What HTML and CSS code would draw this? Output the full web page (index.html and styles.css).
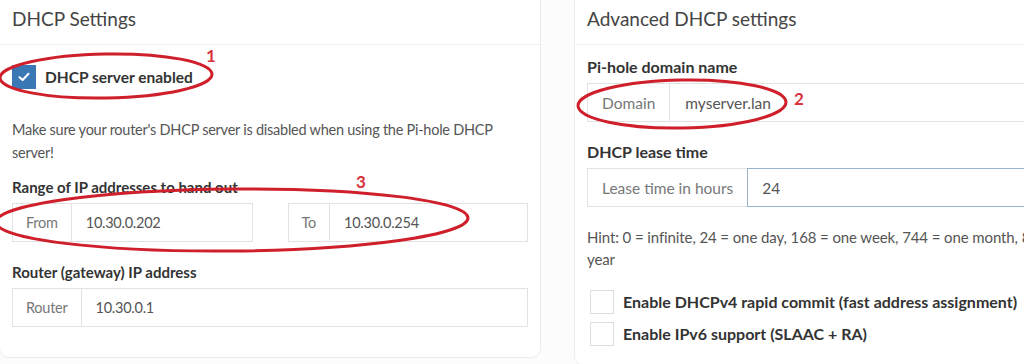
FILE: index.html
```html
<!DOCTYPE html>
<html lang="en">
<head>
    <meta charset="UTF-8">
    <title>DHCP</title>
    <link rel="stylesheet" href="styles.css">
</head>
<body>
    <div class="page">
        <section class="card card-left">
            <div class="card-header">
                <h3>DHCP Settings</h3>
            </div>
            <div class="card-body">
                <label class="check check-main">
                    <span class="box checked">
                        <svg width="14" height="14" viewBox="0 0 14 14"><polyline points="2.5,7.2 5.6,10 11.5,3.8" fill="none" stroke="#fff" stroke-width="2" stroke-linecap="round" stroke-linejoin="round"/></svg>
                    </span>
                    <span>DHCP server enabled</span>
                </label>
                <p class="note">Make sure your router's DHCP server is disabled when using the Pi-hole DHCP server!</p>

                <div class="form-group">
                    <label class="field-label">Range of IP addresses to hand out</label>
                    <div class="range-row">
                        <div class="input-group">
                            <span class="addon">From</span>
                            <input type="text" value="10.30.0.202">
                        </div>
                        <div class="input-group">
                            <span class="addon">To</span>
                            <input type="text" value="10.30.0.254">
                        </div>
                    </div>
                </div>

                <div class="form-group">
                    <label class="field-label">Router (gateway) IP address</label>
                    <div class="input-group">
                        <span class="addon">Router</span>
                        <input type="text" value="10.30.0.1">
                    </div>
                </div>
            </div>
        </section>

        <section class="card card-right">
            <div class="card-header">
                <h3>Advanced DHCP settings</h3>
            </div>
            <div class="card-body">
                <div class="form-group">
                    <label class="field-label">Pi-hole domain name</label>
                    <div class="input-group">
                        <span class="addon">Domain</span>
                        <input type="text" value="myserver.lan">
                    </div>
                </div>

                <div class="form-group">
                    <label class="field-label">DHCP lease time</label>
                    <div class="input-group">
                        <span class="addon">Lease time in hours</span>
                        <input type="text" value="24" class="focused">
                    </div>
                </div>

                <p class="note hint">Hint: 0 = infinite, 24 = one day, 168 = one week, 744 = one month, 8760 = one year</p>

                <div class="check-list">
                    <label class="check">
                        <span class="box"></span>
                        <span>Enable DHCPv4 rapid commit (fast address assignment)</span>
                    </label>
                    <label class="check">
                        <span class="box"></span>
                        <span>Enable IPv6 support (SLAAC + RA)</span>
                    </label>
                </div>
            </div>
        </section>
    </div>

    <!-- hand drawn annotations on top of the screenshot -->
    <svg class="marks" width="1024" height="364" viewBox="0 0 1024 364">
        <ellipse cx="106" cy="76" rx="106" ry="22" transform="rotate(-1 106 76)"/>
        <ellipse cx="232" cy="220" rx="236" ry="31" transform="rotate(-0.5 232 220)"/>
        <ellipse cx="682" cy="104" rx="104" ry="24" transform="rotate(-1 682 104)"/>
        <text x="206" y="62">1</text>
        <text x="356" y="188">3</text>
        <text x="794" y="105">2</text>
    </svg>
</body>
</html>
```

FILE: styles.css
```css
:root {
    --text: #555;
    --text-dark: #333;
    --heading: #444;
    --border: #e2e2e2;
    --card-border: #ececec;
    --blue: #3a77b5;
    --mark: #cf1f2b;
}

html, body {
    height: 364px;
    overflow: hidden;
}

body {
    margin: 0;
    position: relative;
    font-family: Lato, "Open Sans", sans-serif;
    font-size: 14.5px;
    letter-spacing: -0.25px;
    color: var(--text);
    background-color: #fcfcfc;
}

.page {
    display: flex;
    gap: 33px;
    margin-top: -12px;
}

.card {
    flex: 0 0 542px;
    width: 542px;
    min-width: 0;
    box-sizing: border-box;
    background-color: #fff;
    border: 1px solid var(--card-border);
    border-radius: 10px;
}

.card-left {
    height: 370px;
    margin-left: -1px;
}

.card-right {
    height: 378px;
}

.card-header {
    height: 56px;
    box-sizing: border-box;
    padding: 18px 12px 0;
    border-bottom: 1px solid #f0f0f0;
}

.card-header h3 {
    margin: 0;
    font-size: 19px;
    font-weight: normal;
    line-height: 24px;
    letter-spacing: 0;
    color: var(--heading);
}

.card-body {
    padding: 11px 12px 0 12px;
}

.check {
    display: flex;
    align-items: center;
    gap: 9px;
    font-size: 15.5px;
    font-weight: bold;
    letter-spacing: 0;
    color: var(--text-dark);
    height: 25px;
}

.check-main {
    margin-top: 8px;
}

.box {
    flex: none;
    width: 24px;
    height: 24px;
    box-sizing: border-box;
    border: 1px solid #dcdcdc;
    background-color: #fff;
    display: flex;
    align-items: center;
    justify-content: center;
}

.box.checked {
    border: none;
    background-color: var(--blue);
}

.note {
    margin: 29px 0 12px;
    line-height: 23px;
}

.form-group {
    margin-bottom: 19px;
}

.field-label {
    display: block;
    font-size: 15px;
    font-weight: bold;
    letter-spacing: 0;
    color: var(--text-dark);
    line-height: 22px;
    margin-bottom: 5px;
}

.range-row {
    display: grid;
    grid-template-columns: minmax(0, 1fr) minmax(0, 1fr);
    gap: 35px;
}

.input-group {
    display: flex;
    height: 39px;
    box-sizing: border-box;
    border: 1px solid var(--border);
}

.addon {
    display: flex;
    align-items: center;
    padding: 0 13px;
    color: #777;
    border-right: 1px solid var(--border);
    white-space: nowrap;
}

.input-group input {
    flex: 1;
    width: 0;
    min-width: 0;
    border: none;
    padding: 0 14px;
    font-family: inherit;
    font-size: 14.5px;
    letter-spacing: -0.25px;
    color: var(--text);
    background: #fff;
    outline: none;
}

/* right card was captured a bit larger */
.card-right .field-label {
    font-size: 16px;
}

.card-right .check {
    font-size: 16px;
}

.card-right .addon {
    padding: 0 14px;
    font-size: 15.5px;
    letter-spacing: 0;
}

.card-right .input-group input {
    font-size: 15.5px;
    letter-spacing: 0;
    padding-left: 15px;
}

.card-right .input-group input.focused {
    box-shadow: inset 0 0 0 1px #98b5cd;
    margin: -1px;
    padding-left: 15px;
}

.hint {
    margin: 1px 0 19px;
    line-height: 22px;
    font-size: 15px;
    letter-spacing: -0.1px;
}

.check-list {
    display: flex;
    flex-direction: column;
    gap: 7px;
    padding-left: 3px;
}

.marks {
    position: absolute;
    top: 0;
    left: 0;
    pointer-events: none;
}

.marks ellipse {
    fill: none;
    stroke: var(--mark);
    stroke-width: 3;
}

.marks text {
    fill: #d9323c;
    font-family: Lato, sans-serif;
    font-weight: bold;
    font-size: 17px;
}
```
